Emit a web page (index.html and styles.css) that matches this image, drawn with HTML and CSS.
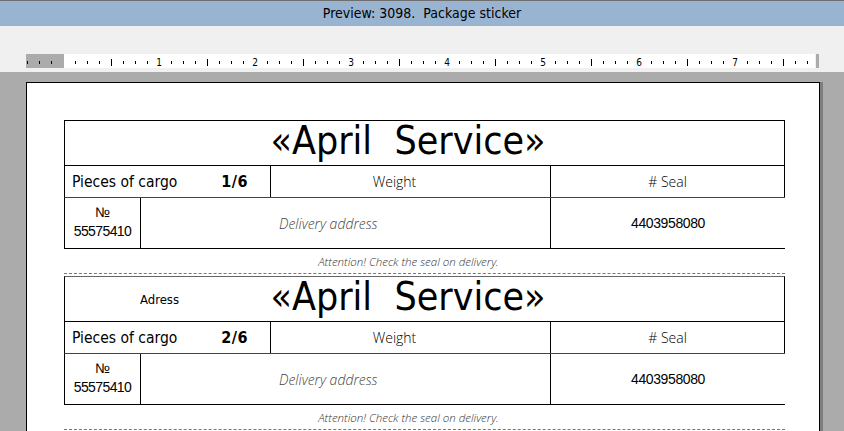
FILE: index.html
```html
<!DOCTYPE html>
<html lang="en">
<head>
    <meta charset="UTF-8">
    <title>Preview: 3098. Package sticker</title>
    <link rel="stylesheet" href="styles.css">
</head>
<body>
<!-- заголовок окна -->
<div class="titlebar">Preview: 3098.&nbsp; Package sticker</div>

<!-- панель с линейкой -->
<div class="toolbar">
    <svg class="ruler" width="794" height="14" viewBox="0 0 794 14">
        <defs>
            <pattern id="ticks" patternUnits="userSpaceOnUse" x="37" y="0" width="96" height="14">
                <rect x="12" y="7" width="1" height="3" fill="#000"/>
                <rect x="24" y="7" width="1" height="3" fill="#000"/>
                <rect x="36" y="7" width="1" height="3" fill="#000"/>
                <rect x="48" y="5" width="1" height="7" fill="#000"/>
                <rect x="60" y="7" width="1" height="3" fill="#000"/>
                <rect x="72" y="7" width="1" height="3" fill="#000"/>
                <rect x="84" y="7" width="1" height="3" fill="#000"/>
            </pattern>
        </defs>
        <rect x="0" y="0" width="38" height="14" fill="#ababab"/>
        <rect x="38" y="0" width="751" height="14" fill="#fff"/>
        <rect x="790" y="0" width="3" height="14" fill="#ababab"/>
        <rect x="0" y="0" width="786" height="14" fill="url(#ticks)"/>
        <g class="ruler-num">
            <text x="133" y="12">1</text>
            <text x="229" y="12">2</text>
            <text x="325" y="12">3</text>
            <text x="421" y="12">4</text>
            <text x="517" y="12">5</text>
            <text x="613" y="12">6</text>
            <text x="709" y="12">7</text>
        </g>
    </svg>
</div>

<!-- область просмотра -->
<div class="viewer">
    <div class="page">

        <div class="sticker">
            <div class="head">
                <span class="addr"></span>
                <span class="brand">«April&nbsp;&nbsp;Service»</span>
            </div>
            <div class="info">
                <div class="cell pieces"><span>Pieces of cargo</span><b>1/6</b></div>
                <div class="cell thin weight">Weight</div>
                <div class="cell thin">#&nbsp;Seal</div>
            </div>
            <div class="info2">
                <div class="cell num">№<br>55575410</div>
                <div class="cell delivery">Delivery address</div>
                <div class="cell seal">4403958080</div>
            </div>
        </div>
        <p class="note">Attention! Check the seal on delivery.</p>

        <div class="sticker next">
            <div class="head">
                <span class="addr">Adress</span>
                <span class="brand">«April&nbsp;&nbsp;Service»</span>
            </div>
            <div class="info">
                <div class="cell pieces"><span>Pieces of cargo</span><b>2/6</b></div>
                <div class="cell thin weight">Weight</div>
                <div class="cell thin">#&nbsp;Seal</div>
            </div>
            <div class="info2">
                <div class="cell num">№<br>55575410</div>
                <div class="cell delivery">Delivery address</div>
                <div class="cell seal">4403958080</div>
            </div>
        </div>
        <p class="note">Attention! Check the seal on delivery.</p>

    </div>
</div>
</body>
</html>
```

FILE: styles.css
```css
body {
    margin: 0;
    padding: 0;
    height: 431px;
    overflow: hidden;
    background-color: #ABABAB;
    font-family: "DejaVu Sans Condensed", "DejaVu Sans", sans-serif;
}

.titlebar {
    height: 25px;
    border-top: 1px solid #6F6F6F;
    background-color: #99B4D1;
    line-height: 25px;
    text-align: center;
    font-size: 14px;
    color: #000;
}

.toolbar {
    height: 46px;
    padding: 28px 0 0 26px;
    box-sizing: border-box;
    background-color: #F0F0F0;
}
.ruler {
    display: block;
}
.ruler-num text {
    font-family: "DejaVu Sans Condensed", "DejaVu Sans", sans-serif;
    font-size: 10px;
    text-anchor: middle;
}

.viewer {
    padding: 10px 0 0 26px;
}
.page {
    width: 794px;
    height: 360px;
    box-sizing: border-box;
    padding: 37px 0 0 37px;
    border: 1px solid #000;
    border-bottom: none;
    background-color: #FFF;
    box-shadow: 3px 0 0 #7E7E7E;
}

.sticker {
    width: 721px;
}
.head, .info, .info2 {
    display: grid;
    box-sizing: border-box;
    border: 1px solid #000;
    border-bottom: none;
}
.next .head {
    border-top-color: #666;
}
.head {
    grid-template-columns: 189px 1fr 222px;
    align-items: center;
    height: 45px;
}
.addr {
    text-align: center;
    font-size: 13px;
}
.brand {
    text-align: center;
    font-size: 39px;
    line-height: 40px;
    padding-bottom: 4px;
    white-space: nowrap;
}

.info {
    grid-template-columns: 205px 280px 1fr;
    height: 32px;
}
.info2 {
    grid-template-columns: 75px 410px 1fr;
    height: 52px;
    border-top-color: #444;
    border-bottom: 1px solid #000;
    border-right: none;
}
.cell {
    display: flex;
    align-items: center;
    justify-content: center;
    box-sizing: border-box;
}
.cell + .cell {
    border-left: 1px solid #000;
}
.pieces {
    justify-content: space-between;
    padding: 0 22px 0 7px;
    font-size: 15.5px;
}
.pieces b {
    font-size: 16px;
    letter-spacing: 0.5px;
}
.thin {
    font-family: "Open Sans", sans-serif;
    font-weight: 300;
    font-size: 14px;
}
.weight {
    padding-right: 32px;
}
.num {
    flex-direction: column;
    font-family: "Liberation Sans", Arial, sans-serif;
    font-size: 14px;
    line-height: 19px;
    letter-spacing: -0.6px;
    text-align: center;
    padding-bottom: 2px;
}
.delivery {
    justify-content: flex-start;
    padding-left: 138px;
    font-family: "Open Sans", sans-serif;
    font-weight: 300;
    font-style: italic;
    font-size: 14px;
    color: #444;
}
.seal {
    font-family: "Liberation Sans", Arial, sans-serif;
    font-size: 14px;
    letter-spacing: -0.4px;
}

.note {
    width: 721px;
    height: 25px;
    margin: 0 0 2px;
    padding-right: 32px;
    box-sizing: border-box;
    border-bottom: 1px dashed #777;
    line-height: 25px;
    text-align: center;
    font-family: "Open Sans", sans-serif;
    font-weight: 300;
    font-style: italic;
    font-size: 11.5px;
    color: #333;
}
```
